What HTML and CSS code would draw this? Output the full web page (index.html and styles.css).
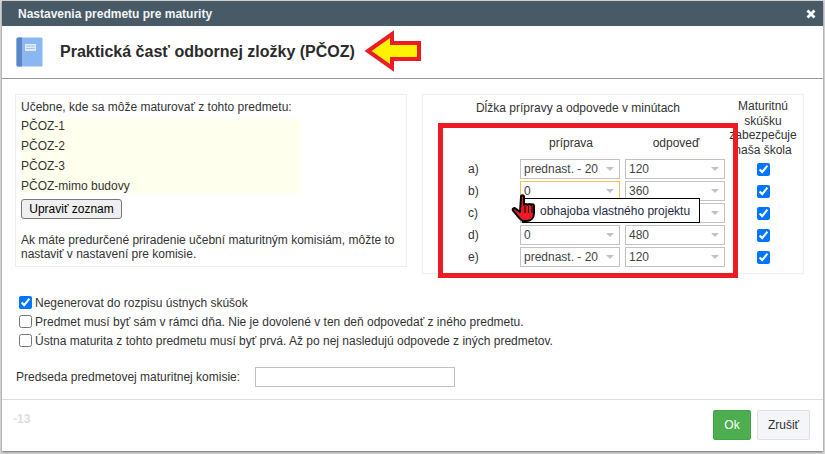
FILE: index.html
```html
<!DOCTYPE html>
<html lang="sk">
<head>
<meta charset="utf-8">
<title>Nastavenia predmetu pre maturity</title>
<link rel="stylesheet" href="styles.css">
</head>
<body>
<div class="modal">
  <header class="bar">
    <span>Nastavenia predmetu pre maturity</span>
    <svg class="close" width="10" height="10" viewBox="0 0 10 10"><path d="M1.500 1.500l7 7M8.500 1.500l-7 7" stroke="#fff" stroke-width="2.800"/></svg>
  </header>
  <div class="heading">
    <svg class="book" width="27" height="30" viewBox="0 0 27 30">
      <rect x="0.500" y="0.500" width="26" height="29" rx="1.500" fill="#8ab6f2"/>
      <path d="M2 0.500h4v29H2a1.500 1.500 0 0 1-1.500-1.500V2A1.500 1.500 0 0 1 2 0.500z" fill="#5a86c6"/>
      <rect x="9" y="7" width="11" height="7" fill="#dfe9f8"/>
      <path d="M10 9h9M10 11.500h9" stroke="#aac4ea" stroke-width="1"/>
    </svg>
    <h1>Praktická časť odbornej zložky (PČOZ)</h1>
  </div>
  <main class="content">
    <div class="panels">
      <section class="panel rooms">
        <p class="rooms-title">Učebne, kde sa môže maturovať z tohto predmetu:</p>
        <ul class="room-list">
          <li>PČOZ-1</li>
          <li>PČOZ-2</li>
          <li>PČOZ-3</li>
          <li>PČOZ-mimo budovy</li>
        </ul>
        <button class="edit" type="button">Upraviť zoznam</button>
        <p class="note">Ak máte predurčené priradenie učební maturitným komisiám, môžte to nastaviť v nastavení pre komisie.</p>
      </section>
      <section class="panel times">
        <div class="times-main">
          <div class="times-title">Dĺžka prípravy a odpovede v minútach</div>
          <div class="grid">
            <span class="head"></span><span class="head col">príprava</span><span class="head col">odpoveď</span>
            <span class="lab">a)</span><div class="sel">prednast. - 20<i></i></div><div class="sel">120<i></i></div>
            <span class="lab">b)</span><div class="sel focus">0<i></i></div><div class="sel">360<i></i></div>
            <span class="lab">c)</span><div class="sel covered"><i></i></div><div class="sel covered"><i></i></div>
            <span class="lab">d)</span><div class="sel">0<i></i></div><div class="sel">480<i></i></div>
            <span class="lab">e)</span><div class="sel">prednast. - 20<i></i></div><div class="sel">120<i></i></div>
          </div>
        </div>
        <div class="school">
          <div class="school-title">Maturitnú skúšku zabezpečuje naša škola</div>
          <input type="checkbox" checked>
          <input type="checkbox" checked>
          <input type="checkbox" checked>
          <input type="checkbox" checked>
          <input type="checkbox" checked>
        </div>
      </section>
    </div>
    <div class="options">
      <label><input type="checkbox" checked>Negenerovat do rozpisu ústnych skúšok</label>
      <label><input type="checkbox">Predmet musí byť sám v rámci dňa. Nie je dovolené v ten deň odpovedať z iného predmetu.</label>
      <label><input type="checkbox">Ústna maturita z tohto predmetu musí byť prvá. Až po nej nasledujú odpovede z iných predmetov.</label>
    </div>
    <div class="chair">
      <span>Predseda predmetovej maturitnej komisie:</span>
      <input class="chair-input" type="text">
    </div>
  </main>
  <footer class="foot">
    <span class="code">-13</span>
    <div class="actions">
      <button class="ok" type="button">Ok</button>
      <button class="cancel" type="button">Zrušiť</button>
    </div>
  </footer>
</div>

<div class="red-frame"></div>
<svg class="arrow" width="60" height="42" viewBox="0 0 60 42">
  <path d="M5 21L29 4v9h27v16H29v9z" fill="#fff200" stroke="#ed1c24" stroke-width="4" stroke-linejoin="miter"/>
</svg>
<div class="tooltip">obhajoba vlastného projektu</div>
<svg class="hand" width="28" height="30" viewBox="0 0 28 30">
  <path d="M10 3c0-2.500 3-2.500 3 0v8c1-1.500 3-1.500 3.500 0 1-1.500 3-1.500 3.500 0 1-1.200 3-1 3 1v7c0 5-3 8-7 8h-3c-3 0-5-3-8-7l-3-3.500c-1-1.500 1-3 2.500-2l4.500 3.500z" fill="#ed1c24" stroke="#000" stroke-width="2" stroke-linejoin="round"/>
  <path d="M14 12v7M17.500 12v7M21 12v7" stroke="#000" stroke-width="1"/>
</svg>
</body>
</html>
```
FILE: styles.css
```css
* { box-sizing: border-box; }
html, body { margin: 0; height: 100%; }
body {
  background: #d8d8d8;
  font-family: "Liberation Sans", Arial, sans-serif;
  font-size: 12px;
  color: #333;
  overflow: hidden;
}
.modal {
  margin: 1px 0 0 2px;
  width: 821px;
  height: 450px;
  background: #fff;
  display: flex;
  flex-direction: column;
  box-shadow: 0 1px 2px rgba(0,0,0,.5);
}
.bar {
  height: 25px;
  flex: none;
  background: #475a66;
  color: #f2f4f5;
  font-weight: bold;
  font-size: 12px;
  display: flex;
  align-items: center;
  justify-content: space-between;
  padding: 0 7px 0 16px;
}
.heading {
  height: 53px;
  flex: none;
  display: flex;
  align-items: center;
  border-bottom: 1px solid #999;
  padding: 0 0 0 14px;
}
.book { margin-right: 17px; }
h1 {
  margin: 0;
  font-size: 16px;
  font-weight: bold;
  color: #2b2b2b;
}
.content { flex: 1; padding: 15px 0 0 0; border-bottom: 1px solid #ddd; }
.panels { display: flex; align-items: flex-start; padding-left: 13px; gap: 15px; }
.panel { border: 1px solid #eee; background: #fff; }
.rooms { width: 392px; height: 173px; padding: 5px; }
.rooms-title { margin: 0; line-height: 14px; }
.room-list {
  list-style: none;
  margin: 5px 0 0;
  padding: 0;
  width: 280px;
  height: 74px;
  background: #ffffee;
  display: flex;
  flex-direction: column;
  gap: 6px;
  line-height: 14px;
}
.edit {
  display: block;
  margin: 6px 0 0;
  width: 101px;
  height: 20px;
  padding: 0;
  border: 1px solid #767676;
  border-radius: 3px;
  background: #efefef;
  color: #000;
  font: 12px "Liberation Sans", Arial, sans-serif;
}
.note { margin: 14px 0 0; line-height: 14px; }
.times { width: 382px; height: 180px; display: flex; }
.times-main { width: 306px; flex: none; }
.times-title { text-align: center; line-height: 14px; margin: 6px 0 0 4px; }
.grid {
  display: grid;
  grid-template-columns: 92px 100px 100px;
  grid-template-rows: 22px;
  column-gap: 5px;
  row-gap: 2px;
  grid-auto-rows: 20px;
  margin-top: 20px;
}
.head { padding-top: 1px; line-height: 14px; }
.col { text-align: center; padding-left: 2px; }
.lab { padding-left: 45px; line-height: 20px; }
.sel {
  height: 20px;
  border: 1px solid #c2c2c2;
  display: flex;
  align-items: center;
  justify-content: space-between;
  padding: 0 5px 0 3px;
  color: #444;
  background: #fff;
}
.sel i {
  width: 0; height: 0;
  border-left: 4px solid transparent;
  border-right: 4px solid transparent;
  border-top: 4px solid #c2c2c2;
}
.sel.covered { justify-content: flex-end; }
.sel.focus { border-color: #efc14e; }
.school {
  width: 68px;
  display: flex;
  flex-direction: column;
  align-items: center;
}
.school-title { text-align: center; line-height: 14.500px; margin-top: 4px; height: 64px; padding: 0 2px; }
.school input { width: 13px; height: 13px; margin: 0 0 9px; flex: none; }
.options { margin: 19px 0 0 17px; display: flex; flex-direction: column; }
.options label { display: flex; align-items: center; height: 19px; }
.options input { width: 13px; height: 13px; margin: 0 3px 0 0; flex: none; }
.chair { display: flex; align-items: center; margin: 17px 0 0 14px; }
.chair-input {
  width: 200px;
  height: 20px;
  margin-left: 15px;
  border: 1px solid #c2c2c2;
  background: #fff;
  padding: 0;
}
.foot {
  height: 51px;
  flex: none;
  display: flex;
  justify-content: space-between;
  padding: 10px 13px 0 11px;
}
.code { color: #ddd; font-weight: bold; margin-top: 2px; line-height: 14px; }
.actions { display: flex; gap: 6px; height: 30px; }
.ok, .cancel {
  font: 12px "Liberation Sans", Arial, sans-serif;
  border-radius: 2px;
  padding: 0;
  height: 30px;
}
.ok { width: 38px; background: #4cae4f; border: 1px solid #46a34a; color: #fff; }
.cancel { width: 53px; background: #f4f5f8; border: 1px solid #dfe0e3; color: #333; }

.red-frame {
  position: absolute;
  left: 438px; top: 123px;
  width: 300px; height: 155px;
  border: 5px solid #ed1c24;
}
.arrow { position: absolute; left: 363px; top: 30px; }
.tooltip {
  position: absolute;
  left: 522px; top: 198px;
  width: 178px; height: 25px;
  border: 1px solid #000;
  background: #fff;
  line-height: 24px;
  padding-left: 17px;
  color: #1f2a44;
}
.hand { position: absolute; left: 511px; top: 194px; }
```
